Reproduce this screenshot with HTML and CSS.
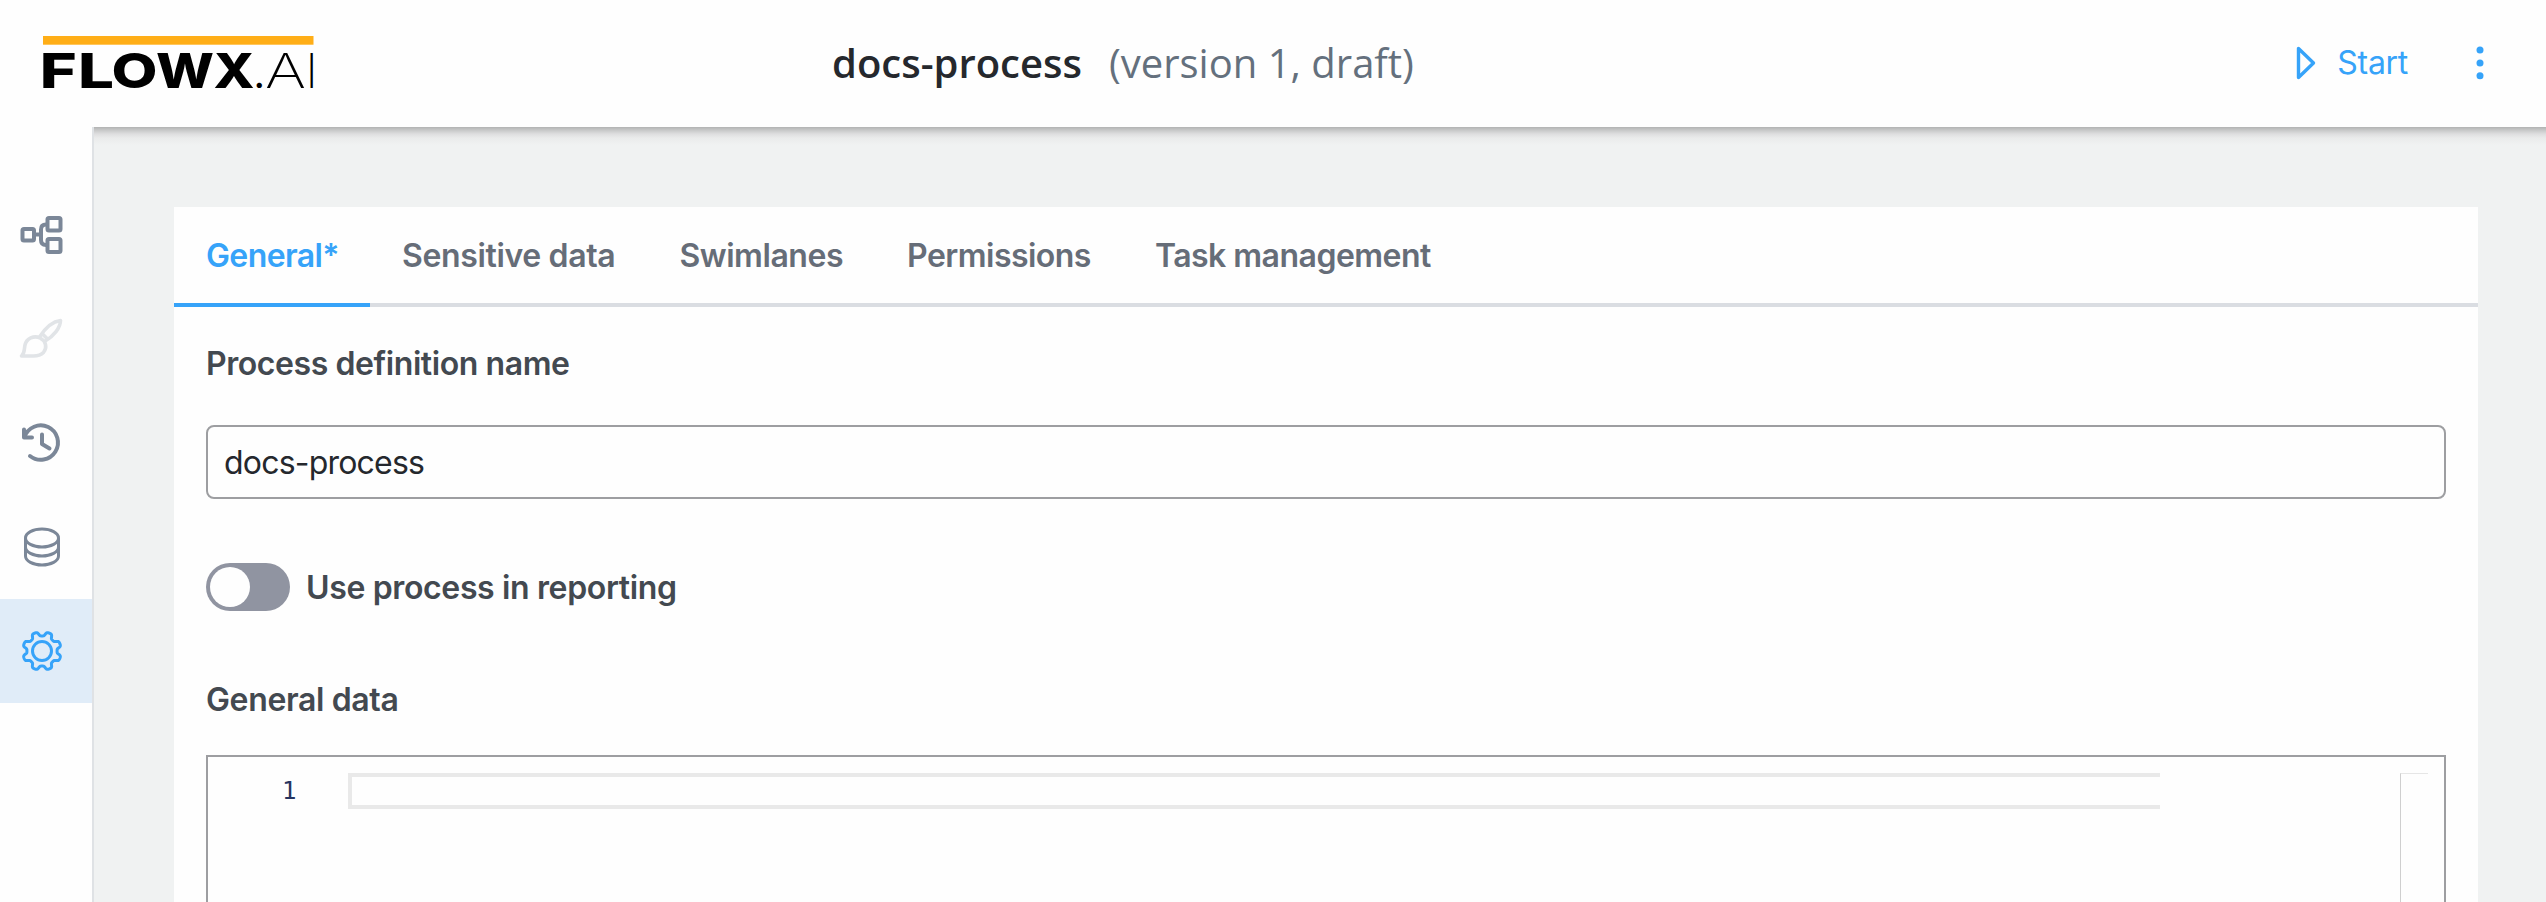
FILE: index.html
```html
<!DOCTYPE html>
<html lang="en">
<head>
<meta charset="utf-8">
<title>FLOWX.AI</title>
<link rel="stylesheet" href="styles.css">
</head>
<body>
<div class="app">
  <header class="header">
    <svg class="logo" width="288" height="90" viewBox="-4 -15 288 90">
      <rect x="2" y="6" width="270.5" height="8.700" fill="#ffae17"/>
      <g class="logo-bold">
        <text x="-1.200" y="57.500" textLength="37" lengthAdjust="spacingAndGlyphs">F</text>
        <text x="37" y="57.500" textLength="36" lengthAdjust="spacingAndGlyphs">L</text>
        <text x="70.500" y="57.500" textLength="46" lengthAdjust="spacingAndGlyphs">O</text>
        <text x="115" y="57.500" textLength="58" lengthAdjust="spacingAndGlyphs">W</text>
        <text x="172.500" y="57.500" textLength="41" lengthAdjust="spacingAndGlyphs">X</text>
      </g>
      <g class="logo-thin">
        <text x="212.500" y="57.500" class="logo-dot">.</text>
        <text x="224" y="57.500" textLength="41" lengthAdjust="spacingAndGlyphs">A</text>
        <text x="264.500" y="57.500">I</text>
      </g>
    </svg>
    <div class="title"><h1 class="name">docs-process</h1><span class="version">(version 1, draft)</span></div>
    <div class="actions">
      <button class="start">
        <svg width="24" height="36" viewBox="0 0 24 36"><path d="M4.500 3.500v29L19.500 18z" fill="none" stroke="currentColor" stroke-width="3.400" stroke-linejoin="round"/></svg>
        <span>Start</span>
      </button>
      <svg class="more" width="12" height="36" viewBox="0 0 12 36" fill="currentColor"><circle cx="6" cy="5" r="3.500"/><circle cx="6" cy="18" r="3.500"/><circle cx="6" cy="30.700" r="3.500"/></svg>
    </div>
  </header>
  <div class="body">
    <nav class="sidebar">
      <a class="item"><svg viewBox="0 0 48 48" fill="none" stroke="currentColor" stroke-width="4"><rect x="4.500" y="18" width="11.500" height="11.500" rx="1.500"/><rect x="29.500" y="7" width="13" height="12.500" rx="1.500"/><rect x="29.500" y="28" width="13" height="13" rx="1.500"/><path d="M16 23.500h7M29.500 13.500H28q-5 0-5 5v10.500q0 5 5 5h1.500"/></svg></a>
      <a class="item disabled"><svg viewBox="0 0 48 48" fill="none" stroke="currentColor" stroke-width="3.600" stroke-linejoin="round"><path d="M3.500 41C7 38 6 34 7 30c1.500-6.500 9-10 15-7 6 3 7.500 9.500 3.500 14.500-3 3-6 3.500-10 3.500z"/><path d="M21.500 22C27 13.500 34 6.500 42.500 5.500c0 7-6.500 15.500-16 21M24 18.500l6 6"/></svg></a>
      <a class="item"><svg viewBox="0 0 48 48" fill="none" stroke="currentColor" stroke-width="4" stroke-linecap="round" stroke-linejoin="round"><path d="M6 10.500v8h8M6.500 18A17.200 17.200 0 1 1 12 37M24 15.500v9.500l7.500 4.500"/></svg></a>
      <a class="item"><svg viewBox="0 0 48 48" fill="none" stroke="currentColor" stroke-width="3"><ellipse cx="24" cy="15" rx="16.500" ry="9"/><path d="M7.500 15v18c0 5 7.500 9 16.500 9s16.500-4 16.500-9V15M7.500 24c0 5 7.500 9 16.500 9s16.500-4 16.500-9"/></svg></a>
      <a class="item active"><svg viewBox="0 0 48 48" fill="none" stroke="currentColor" stroke-width="3" stroke-linejoin="round"><path id="gear" d=""/><circle cx="24" cy="24" r="9.500"/></svg></a>
    </nav>
    <main class="content">
      <section class="panel">
        <div class="tabs">
          <a class="tab selected">General*</a><a class="tab t2">Sensitive data</a><a class="tab t3">Swimlanes</a><a class="tab t4">Permissions</a><a class="tab t5">Task management</a>
        </div>
        <div class="form">
          <label class="label l1">Process definition name</label>
          <div class="input">docs-process</div>
          <div class="toggle-row"><span class="toggle"><span class="knob"></span></span><span class="label l2">Use process in reporting</span></div>
          <label class="label l3">General data</label>
          <div class="editor">
            <div class="gutter">1</div>
            <div class="line"></div>
            <div class="ruler"></div>
          </div>
        </div>
      </section>
    </main>
  </div>
</div>
<script src="gear.js"></script>
</body>
</html>
```
FILE: styles.css
```css
* { box-sizing: border-box; }
body { margin: 0; background: #fefefe; font-family: Inter, "Liberation Sans", sans-serif; }
.app { width: 2546px; height: 902px; overflow: hidden; display: flex; flex-direction: column; }
.header { height: 127px; flex: none; display: flex; align-items: center; padding-bottom: 2px; background: #fefefe; }
.logo { margin: -6px 0 0 37px; flex: none; }
.logo-bold { font-family: Inter, sans-serif; font-size: 48px; font-weight: 800; fill: #000; }
.logo-thin { font-family: Inter, sans-serif; font-size: 48px; font-weight: 200; fill: #000; }
.logo-dot { font-size: 40px; font-weight: 400; }
.title { display: flex; align-items: baseline; gap: 27px; margin-left: 507px; white-space: nowrap; font-family: "Open Sans", sans-serif; font-size: 40px; line-height: 56px; }
.name { margin: 0; font-size: 40px; font-weight: 600; color: #25282d; }
.version { color: #64707d; }
.actions { display: flex; align-items: center; margin-left: auto; padding-right: 60px; color: #36a3f9; }
.start { display: flex; align-items: center; gap: 19px; border: 0; padding: 0; background: none; color: inherit; font: 400 32px/40px Inter, sans-serif; letter-spacing: -0.3px; margin-right: 66px; }
.body { flex: 1; display: flex; min-height: 0; }
.sidebar { width: 94px; flex: none; padding-top: 56px; border-right: 2px solid #dfe2e5; background: #fefefe; color: #7b8798; }
.item { height: 104px; display: flex; align-items: center; padding-left: 18px; }
.item svg { width: 48px; height: 48px; }
.disabled { color: #e1e4e7; }
.active { background: #e0ecf8; color: #36a3f9; }
.content { flex: 1; padding: 80px 68px 0 80px; background: linear-gradient(#b2b3b3 0, #c6c7c7 3px, #dededf 7px, #eaebeb 11px, #f0f2f2 18px); }
.panel { height: 100%; background: #fefefe; }
.tabs { display: flex; height: 100px; border-bottom: 4px solid #dadde2; }
.tab { padding: 0 32px; height: 100px; font-size: 32px; line-height: 97px; font-weight: 600; color: #666d78; white-space: nowrap; }
.selected { width: 196px; border-bottom: 4px solid #36a3f9; color: #36a3f9; letter-spacing: -0.6px; }
.t2 { letter-spacing: -0.35px; }
.t3 { letter-spacing: -0.45px; }
.t4 { letter-spacing: -0.53px; }
.t5 { letter-spacing: -0.52px; }
.form { padding: 37px 32px 0; display: flex; flex-direction: column; }
.label { font-size: 32px; line-height: 40px; font-weight: 600; color: #434950; white-space: nowrap; letter-spacing: -0.36px; }
.l1 { letter-spacing: -0.42px; }
.l2 { padding-top: 2px; }
.input { height: 74px; margin-top: 41px; border: 2px solid #9d9ea1; border-radius: 8px; padding: 0 16px; font-size: 32px; line-height: 72px; letter-spacing: -0.8px; color: #25282d; }
.toggle-row { display: flex; align-items: center; gap: 16px; height: 48px; margin-top: 64px; }
.toggle { width: 84px; height: 48px; padding: 4px; border-radius: 24px; background: #9094a1; }
.knob { display: block; width: 40px; height: 40px; border-radius: 50%; background: #fefefe; }
.l3 { margin-top: 69px; }
.editor { height: 400px; margin-top: 35px; border: 2px solid #9d9ea1; padding-top: 16px; display: flex; }
.gutter { width: 140px; padding-left: 74px; font: 24px/36px "DejaVu Sans Mono", monospace; color: #26345f; }
.line { width: 1812px; height: 36px; border: 4px solid #e9e9e9; border-right: 0; }
.ruler { width: 28px; margin-left: 240px; border-left: 1px solid #cfcfcf; border-top: 1px solid #e6e6e6; }
```
FILE: gear.js
```js
// Build an eight-tooth gear outline around the centre of its viewBox.
const points = [];
for (let i = 0; i <= 240; i++) {
  const a = (i / 240) * Math.PI * 2;
  const r = 17.2 + 2.2 * Math.tanh(2 * Math.cos(8 * (a + Math.PI / 8)));
  points.push((24 + r * Math.cos(a)).toFixed(2) + " " + (24 + r * Math.sin(a)).toFixed(2));
}
document.getElementById("gear").setAttribute("d", "M" + points.join("L") + "Z");
```
